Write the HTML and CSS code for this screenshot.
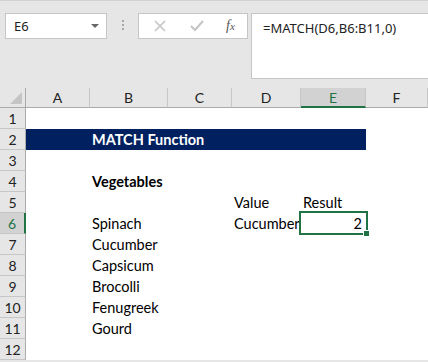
FILE: index.html
```html
<!DOCTYPE html>
<html lang="en">
    <head>
        <meta charset="UTF-8" />
        <meta name="viewport" content="width=device-width, initial-scale=1.0" />
        <title>MATCH Function</title>
        <link rel="stylesheet" href="styles.css">
    </head>
    <body>
        <div class="formula-bar">
            <div class="name-box">
                <span>E6</span>
                <span class="drop"></span>
            </div>
            <div class="dots"><i></i><i></i><i></i></div>
            <div class="buttons">
                <svg class="btn" width="12" height="12" viewBox="0 0 12 12">
                    <path d="M1 1 L11 11 M11 1 L1 11" stroke="#c4c4c4" stroke-width="1.6" fill="none" />
                </svg>
                <svg class="btn" width="14" height="12" viewBox="0 0 14 12">
                    <path d="M1 6 L5 10 L13 1" stroke="#c4c4c4" stroke-width="2" fill="none" />
                </svg>
                <span class="fx">f<sub>x</sub></span>
            </div>
            <div class="formula">=MATCH(D6,B6:B11,0)</div>
        </div>

        <div class="sheet">
            <div class="corner"><span class="tri"></span></div>
            <div class="ch">A</div>
            <div class="ch">B</div>
            <div class="ch">C</div>
            <div class="ch">D</div>
            <div class="ch sel">E</div>
            <div class="ch">F</div>

            <div class="rh">1</div>
            <div class="row-blank"></div>

            <div class="rh">2</div>
            <div class="cell band"></div>
            <div class="cell band title">MATCH Function</div>
            <div class="cell"></div>

            <div class="rh">3</div>
            <div class="row-blank"></div>

            <div class="rh">4</div>
            <div class="cell"></div>
            <div class="cell bold">Vegetables</div>
            <div class="cell"></div>
            <div class="cell"></div>
            <div class="cell"></div>
            <div class="cell"></div>

            <div class="rh">5</div>
            <div class="cell"></div>
            <div class="cell"></div>
            <div class="cell"></div>
            <div class="cell">Value</div>
            <div class="cell">Result</div>
            <div class="cell"></div>

            <div class="rh sel-row">6</div>
            <div class="cell"></div>
            <div class="cell">Spinach</div>
            <div class="cell"></div>
            <div class="cell">Cucumber</div>
            <div class="cell num active">2</div>
            <div class="cell"></div>

            <div class="rh">7</div>
            <div class="cell"></div>
            <div class="cell">Cucumber</div>
            <div class="cell wide"></div>

            <div class="rh">8</div>
            <div class="cell"></div>
            <div class="cell">Capsicum</div>
            <div class="cell wide"></div>

            <div class="rh">9</div>
            <div class="cell"></div>
            <div class="cell">Brocolli</div>
            <div class="cell wide"></div>

            <div class="rh">10</div>
            <div class="cell"></div>
            <div class="cell">Fenugreek</div>
            <div class="cell wide"></div>

            <div class="rh">11</div>
            <div class="cell"></div>
            <div class="cell">Gourd</div>
            <div class="cell wide"></div>

            <div class="rh">12</div>
            <div class="row-blank"></div>
        </div>
    </body>
</html>
```

FILE: styles.css
```css
* {
    box-sizing: border-box;
}
body {
    margin: 0;
    background-color: #e6e6e6;
    font-family: Lato, "Open Sans", sans-serif;
    overflow: hidden;
    height: 362px;
}
.formula-bar {
    display: flex;
    align-items: flex-start;
    height: 88px;
    padding: 12px 0 0 5px;
    border-top: 1px solid #d2d2d2;
}
.name-box {
    display: flex;
    align-items: center;
    justify-content: space-between;
    width: 102px;
    height: 26px;
    padding: 0 7px 0 8px;
    background: #fff;
    border: 1px solid #c6c6c6;
    font-family: "Noto Sans", sans-serif;
    font-size: 13px;
    color: #222;
}
.drop {
    width: 0;
    height: 0;
    border-left: 4px solid transparent;
    border-right: 4px solid transparent;
    border-top: 4px solid #666;
}
.dots {
    display: flex;
    flex-direction: column;
    gap: 2px;
    width: 31px;
    align-items: center;
    padding-top: 7px;
}
.dots i {
    width: 2px;
    height: 2px;
    background: #a8a8a8;
}
.buttons {
    display: flex;
    align-items: center;
    width: 110px;
    height: 26px;
    padding-left: 15px;
    background: #fff;
    border: 1px solid #c6c6c6;
}
.buttons .btn:first-child {
    margin-right: 24px;
}
.buttons .btn:nth-child(2) {
    margin-right: 22px;
}
.fx {
    font-family: "Liberation Serif", serif;
    font-style: italic;
    font-size: 14px;
    color: #555;
}
.fx sub {
    font-size: 11px;
    vertical-align: 0;
}
.formula {
    flex: 1;
    height: 66px;
    margin-left: 3px;
    padding: 5px 0 0 11px;
    background: #fff;
    border: 1px solid #c6c6c6;
    border-right: none;
    font-family: "Noto Sans", sans-serif;
    font-size: 13px;
    color: #222;
}
.sheet {
    display: grid;
    grid-template-columns: 26px 64px 78px 64px 69px 65px 1fr;
    grid-template-rows: 20px;
    grid-auto-rows: 21px;
    background: #fff;
    font-size: 14.5px;
    color: #000;
}
.corner {
    position: relative;
    background: #e6e6e6;
    border-right: 1px solid #ababab;
    border-bottom: 1px solid #ababab;
}
.tri {
    position: absolute;
    right: 3px;
    bottom: 3px;
    width: 0;
    height: 0;
    border-left: 12px solid transparent;
    border-bottom: 12px solid #c4c4c4;
}
.ch {
    display: flex;
    align-items: center;
    justify-content: center;
    background: #e6e6e6;
    border-right: 1px solid #c6c6c6;
    border-bottom: 1px solid #ababab;
    font-size: 14px;
    color: #222;
}
.ch.sel {
    background: #d2d2d2;
    border-bottom: 2px solid #217346;
    color: #217346;
}
.rh {
    display: flex;
    align-items: center;
    justify-content: center;
    background: #e6e6e6;
    border-right: 1px solid #ababab;
    border-bottom: 1px solid #c6c6c6;
    font-size: 14px;
    color: #222;
}
.rh.sel-row {
    background: #d2d2d2;
    border-right: 2px solid #217346;
    color: #217346;
}
.row-blank {
    grid-column: 2 / -1;
}
.cell {
    display: flex;
    align-items: flex-end;
    padding: 0 0 1px 2px;
    white-space: nowrap;
    line-height: 18px;
}
.cell.wide {
    grid-column: 4 / -1;
}
.band {
    background: #002060;
    color: #fff;
    font-weight: bold;
}
.band.title {
    grid-column: span 4;
}
.bold {
    font-weight: bold;
}
.num {
    justify-content: flex-end;
    padding-right: 4px;
}
.active {
    position: relative;
}
.active::before {
    content: "";
    position: absolute;
    top: -2px;
    left: -2px;
    right: -2px;
    bottom: -1px;
    border: 2px solid #217346;
}
.active::after {
    content: "";
    position: absolute;
    right: -4px;
    bottom: -3px;
    width: 5px;
    height: 5px;
    background: #217346;
    border: 1px solid #fff;
}
```
